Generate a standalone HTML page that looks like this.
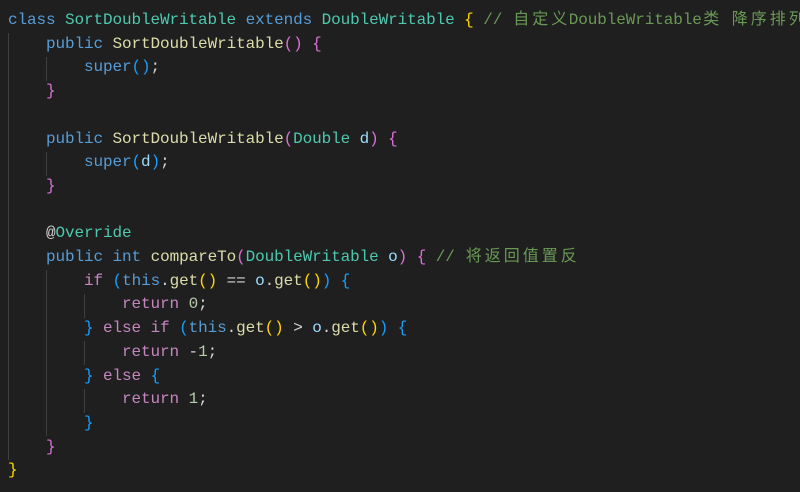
<!DOCTYPE html>
<html><head><meta charset="utf-8"><style>
body{margin:0;background:#1f1f1f;width:800px;height:490px;overflow:hidden;position:relative}
#w{position:absolute;left:0;top:2px;width:800px;height:490px}
.l{position:absolute;left:8px;white-space:pre;font-family:"Liberation Mono","Noto Sans CJK SC",monospace;font-size:16px;letter-spacing:-0.1px;line-height:23.7px;height:23.7px;color:#d4d4d4}
.c{display:inline-block;width:19px;text-align:center;letter-spacing:0}
.g{position:absolute;width:1px;background:#404040}
.k{color:#569cd6}.t{color:#4ec9b0}.f{color:#dcdcaa}.p{color:#c586c0}.v{color:#9cdcfe}.n{color:#b5cea8}.cm{color:#6a9955}
.y{color:#ffd700}.m{color:#da70d6}.b{color:#179fff}
</style></head><body><div id="w">
<div class="g" style="left:8px;top:31px;height:427px"></div>
<div class="g" style="left:46px;top:55px;height:24px"></div>
<div class="g" style="left:46px;top:150px;height:24px"></div>
<div class="g" style="left:46px;top:268px;height:166px"></div>
<div class="g" style="left:84px;top:292px;height:24px"></div>
<div class="g" style="left:84px;top:339px;height:24px"></div>
<div class="g" style="left:84px;top:387px;height:24px"></div>

<div class="l" style="top:7px"><span class="k">class</span> <span class="t">SortDoubleWritable</span> <span class="k">extends</span> <span class="t">DoubleWritable</span> <span class="y">{</span> <span class="cm">// <span class="c">自</span><span class="c">定</span><span class="c">义</span>DoubleWritable<span class="c">类</span> <span class="c">降</span><span class="c">序</span><span class="c">排</span><span class="c">列</span></span></div>
<div class="l" style="top:30.7px">    <span class="k">public</span> <span class="f">SortDoubleWritable</span><span class="m">()</span> <span class="m">{</span></div>
<div class="l" style="top:54.4px">        <span class="k">super</span><span class="b">()</span>;</div>
<div class="l" style="top:78.1px">    <span class="m">}</span></div>
<div class="l" style="top:125.5px">    <span class="k">public</span> <span class="f">SortDoubleWritable</span><span class="m">(</span><span class="t">Double</span> <span class="v">d</span><span class="m">)</span> <span class="m">{</span></div>
<div class="l" style="top:149.2px">        <span class="k">super</span><span class="b">(</span><span class="v">d</span><span class="b">)</span>;</div>
<div class="l" style="top:172.9px">    <span class="m">}</span></div>
<div class="l" style="top:220.3px">    @<span class="t">Override</span></div>
<div class="l" style="top:244px">    <span class="k">public</span> <span class="k">int</span> <span class="f">compareTo</span><span class="m">(</span><span class="t">DoubleWritable</span> <span class="v">o</span><span class="m">)</span> <span class="m">{</span> <span class="cm">// <span class="c">将</span><span class="c">返</span><span class="c">回</span><span class="c">值</span><span class="c">置</span><span class="c">反</span></span></div>
<div class="l" style="top:267.7px">        <span class="p">if</span> <span class="b">(</span><span class="k">this</span>.<span class="f">get</span><span class="y">()</span> == <span class="v">o</span>.<span class="f">get</span><span class="y">()</span><span class="b">)</span> <span class="b">{</span></div>
<div class="l" style="top:291.4px">            <span class="p">return</span> <span class="n">0</span>;</div>
<div class="l" style="top:315.1px">        <span class="b">}</span> <span class="p">else</span> <span class="p">if</span> <span class="b">(</span><span class="k">this</span>.<span class="f">get</span><span class="y">()</span> &gt; <span class="v">o</span>.<span class="f">get</span><span class="y">()</span><span class="b">)</span> <span class="b">{</span></div>
<div class="l" style="top:338.8px">            <span class="p">return</span> -<span class="n">1</span>;</div>
<div class="l" style="top:362.5px">        <span class="b">}</span> <span class="p">else</span> <span class="b">{</span></div>
<div class="l" style="top:386.2px">            <span class="p">return</span> <span class="n">1</span>;</div>
<div class="l" style="top:409.9px">        <span class="b">}</span></div>
<div class="l" style="top:433.6px">    <span class="m">}</span></div>
<div class="l" style="top:457.3px"><span class="y">}</span></div>
</div></body></html>
